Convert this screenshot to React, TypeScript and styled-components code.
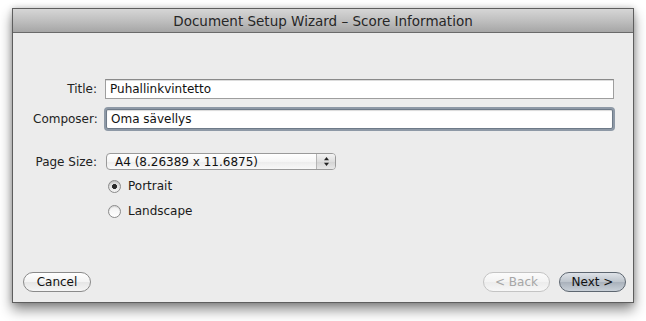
import React from "react";
import styled, { createGlobalStyle } from "styled-components";

const GlobalStyle = createGlobalStyle`
  html, body {
    margin: 0;
    padding: 0;
    background: #ffffff;
  }
  body {
    font-family: "DejaVu Sans", "Liberation Sans", sans-serif;
    font-size: 12px;
    color: #1a1a1a;
  }
`;

const Page = styled.div`
  width: 646px;
  height: 321px;
  padding: 8px 12px 0 12px;
  box-sizing: border-box;
`;

const Window = styled.div`
  width: 622px;
  height: 295px;
  box-sizing: border-box;
  border: 1px solid #5e5e5e;
  background: #ececec;
  display: flex;
  flex-direction: column;
  box-shadow: 0 7px 12px rgba(0, 0, 0, 0.45), 0 0 6px rgba(0, 0, 0, 0.2);
`;

const TitleBar = styled.div`
  height: 23px;
  flex: none;
  border-bottom: 1px solid #6a6a6a;
  background: linear-gradient(#d6d6d6, #bdbdbd 55%, #a6a6a6);
  display: flex;
  align-items: center;
  justify-content: center;
  font-size: 13.5px;
  color: #262626;
`;

const Content = styled.div`
  flex: 1;
  display: flex;
  flex-direction: column;
  padding: 46px 19px 10px 20px;
`;

const Form = styled.div`
  display: grid;
  grid-template-columns: 64px 1fr;
  column-gap: 8px;
  align-items: center;
`;

const Label = styled.label`
  text-align: right;
  white-space: nowrap;
  font-size: 12px;
  color: #222;
`;

const TextField = styled.div<{ $focused?: boolean }>`
  height: 20px;
  box-sizing: border-box;
  background: #fff;
  border: 1px solid ${(p) => (p.$focused ? "#6e7a88" : "#9e9e9e")};
  border-top-color: ${(p) => (p.$focused ? "#6e7a88" : "#8a8a8a")};
  border-radius: ${(p) => (p.$focused ? "2px" : "0")};
  box-shadow: ${(p) =>
    p.$focused
      ? "0 0 0 2px #8e99a6, inset 0 1px 1px rgba(0,0,0,0.15)"
      : "inset 0 1px 0 #dcdcdc"};
  display: flex;
  align-items: center;
  padding-left: 4px;
  font-size: 12px;
  color: #111;
  margin: ${(p) => (p.$focused ? "10px 1px 0 1px" : "0")};
`;

const PopupRow = styled.div`
  margin-top: 24px;
  grid-column: 1 / span 2;
  display: grid;
  grid-template-columns: 64px auto;
  column-gap: 9px;
  align-items: center;
  justify-content: start;
`;

const Popup = styled.div`
  width: 230px;
  height: 17px;
  box-sizing: border-box;
  border: 1px solid #9a9a9a;
  border-radius: 4px;
  background: linear-gradient(#ffffff, #f6f6f6 50%, #ececec 51%, #f9f9f9);
  display: flex;
  align-items: center;
  font-size: 12px;
  color: #111;
  overflow: hidden;
`;

const PopupText = styled.span`
  flex: 1;
  padding-left: 8px;
`;

const Stepper = styled.div`
  width: 18px;
  height: 100%;
  border-left: 1px solid #b5b5b5;
  background: linear-gradient(#f3f3f3, #dedede 50%, #d2d2d2 51%, #e8e8e8);
  display: flex;
  align-items: center;
  justify-content: center;
`;

const Radios = styled.div`
  display: flex;
  flex-direction: column;
  gap: 7px;
  margin-top: 7px;
  padding-left: 75px;
`;

const RadioRow = styled.div`
  display: flex;
  align-items: center;
  gap: 7px;
  height: 18px;
  font-size: 12px;
  color: #1a1a1a;
`;

const RadioCircle = styled.span<{ $checked?: boolean }>`
  width: 13px;
  height: 13px;
  box-sizing: border-box;
  border-radius: 50%;
  border: 1px solid #8a8a8a;
  background: ${(p) =>
    p.$checked
      ? "radial-gradient(circle at 50% 50%, #2a2a2a 0 2.2px, transparent 2.8px), linear-gradient(#d4d4d4, #f4f4f4)"
      : "linear-gradient(#f0f0f0, #ffffff)"};
  box-shadow: inset 0 1px 1px rgba(0, 0, 0, 0.12);
`;

const Footer = styled.div`
  margin-top: auto;
  margin-right: -12px;
  display: flex;
  align-items: center;
  gap: 9px;
`;

const Spacer = styled.div`
  flex: 1;
`;

const Button = styled.button<{ $variant?: "default" | "disabled" | "normal" }>`
  height: 20px;
  padding: 0;
  box-sizing: border-box;
  border-radius: 10px;
  font-family: inherit;
  font-size: 12px;
  display: flex;
  align-items: center;
  justify-content: center;
  border: 1px solid
    ${(p) =>
      p.$variant === "default"
        ? "#5d6670"
        : p.$variant === "disabled"
        ? "#c4c4c4"
        : "#8a8a8a"};
  color: ${(p) => (p.$variant === "disabled" ? "#a6a6a6" : "#111")};
  background: ${(p) =>
    p.$variant === "default"
      ? "linear-gradient(#dfe3e8, #bcc3cb 50%, #a9b1bb 51%, #c9d0d8)"
      : p.$variant === "disabled"
      ? "linear-gradient(#fbfbfb, #f3f3f3 50%, #ececec 51%, #f7f7f7)"
      : "linear-gradient(#ffffff, #f3f3f3 50%, #e6e6e6 51%, #f5f5f5)"};
`;

const CancelButton = styled(Button)`
  width: 68px;
  margin-left: -10px;
`;

const NavButton = styled(Button)`
  width: 67px;
`;

const Arrows = () => (
  <svg width="7" height="11" viewBox="0 0 7 11">
    <path d="M3.5 1 L6 4.2 L1 4.2 Z" fill="#222" />
    <path d="M3.5 10 L6 6.8 L1 6.8 Z" fill="#222" />
  </svg>
);

export default function App() {
  return (
    <>
      <GlobalStyle />
      <Page>
        <Window>
          <TitleBar>Document Setup Wizard – Score Information</TitleBar>
          <Content>
            <Form>
              <Label>Title:</Label>
              <TextField>Puhallinkvintetto</TextField>
              <Label style={{ marginTop: 10 }}>Composer:</Label>
              <TextField $focused>Oma sävellys</TextField>
              <PopupRow>
                <Label>Page Size:</Label>
                <Popup>
                  <PopupText>A4 (8.26389 x 11.6875)</PopupText>
                  <Stepper>
                    <Arrows />
                  </Stepper>
                </Popup>
              </PopupRow>
            </Form>
            <Radios>
              <RadioRow>
                <RadioCircle $checked />
                Portrait
              </RadioRow>
              <RadioRow>
                <RadioCircle />
                Landscape
              </RadioRow>
            </Radios>
            <Footer>
              <CancelButton $variant="normal">Cancel</CancelButton>
              <Spacer />
              <NavButton $variant="disabled">&lt; Back</NavButton>
              <NavButton $variant="default">Next &gt;</NavButton>
            </Footer>
          </Content>
        </Window>
      </Page>
    </>
  );
}
